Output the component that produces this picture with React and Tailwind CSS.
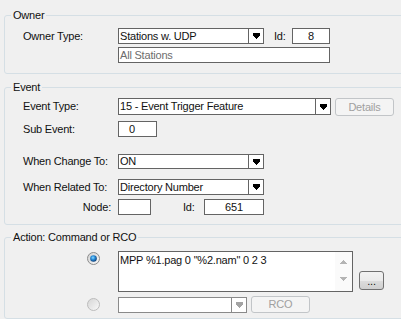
import React from 'react'

function DropArrow({ disabled }) {
  const c = disabled ? '#a3a3a3' : '#000'
  return (
    <svg width="7" height="6" viewBox="0 0 7 6" className="block" shapeRendering="crispEdges">
      <rect x="0" y="0" width="7" height="2" fill={c} />
      <rect x="0" y="2" width="7" height="1" fill={c} />
      <rect x="1" y="3" width="5" height="1" fill={c} />
      <rect x="2" y="4" width="3" height="1" fill={c} />
      <rect x="3" y="5" width="1" height="1" fill={c} />
    </svg>
  )
}

function ScrollArrow({ up }) {
  return (
    <svg width="7" height="4" viewBox="0 0 7 4" className="block" shapeRendering="crispEdges">
      {up ? (
        <>
          <rect x="3" y="0" width="1" height="1" fill="#b4b4b4" />
          <rect x="2" y="1" width="3" height="1" fill="#b4b4b4" />
          <rect x="1" y="2" width="5" height="1" fill="#b4b4b4" />
          <rect x="0" y="3" width="7" height="1" fill="#b4b4b4" />
        </>
      ) : (
        <>
          <rect x="0" y="0" width="7" height="1" fill="#b4b4b4" />
          <rect x="1" y="1" width="5" height="1" fill="#b4b4b4" />
          <rect x="2" y="2" width="3" height="1" fill="#b4b4b4" />
          <rect x="3" y="3" width="1" height="1" fill="#b4b4b4" />
        </>
      )}
    </svg>
  )
}

function Radio({ checked, disabled }) {
  return (
    <svg width="13" height="13" viewBox="0 0 13 13" className="block">
      <defs>
        <linearGradient id="rbOn" x1="0" y1="0" x2="1" y2="1">
          <stop offset="0" stopColor="#cfcfcf" />
          <stop offset="1" stopColor="#fbfbfb" />
        </linearGradient>
        <linearGradient id="rbOff" x1="0" y1="0" x2="1" y2="1">
          <stop offset="0" stopColor="#d4d4d4" />
          <stop offset="1" stopColor="#fafafa" />
        </linearGradient>
        <radialGradient id="rdot" cx="0.42" cy="0.38" r="0.62">
          <stop offset="0" stopColor="#8fdcff" />
          <stop offset="0.45" stopColor="#2a8fdc" />
          <stop offset="1" stopColor="#0d3f78" />
        </radialGradient>
      </defs>
      <circle cx="6.5" cy="6.5" r="6" fill={disabled ? 'url(#rbOff)' : 'url(#rbOn)'} stroke={disabled ? '#bcbcbc' : '#8c8c8c'} />
      {checked && <circle cx="6.5" cy="6.5" r="3.3" fill="url(#rdot)" />}
    </svg>
  )
}

function Combo({ className, value, disabled }) {
  return (
    <div className={`flex bg-white border ${disabled ? 'border-[#8a8a8a]' : 'border-[#646464]'} ${className}`}>
      <div className="flex-1 flex items-center pl-[1px] overflow-hidden whitespace-nowrap">{value}</div>
      <div className={`w-[15px] flex items-center justify-center border-l ${disabled ? 'border-[#8a8a8a]' : 'border-[#646464]'}`}>
        <DropArrow disabled={disabled} />
      </div>
    </div>
  )
}

function Field({ className, children }) {
  return (
    <div className={`flex items-center bg-white border border-[#646464] whitespace-nowrap ${className}`}>{children}</div>
  )
}

function Group({ title, className, inner, children }) {
  return (
    <fieldset className={`rounded-[3px] border border-[#d5dfe5] ${className}`}>
      <legend className="ml-[6px] px-[2px] leading-[13px]">{title}</legend>
      <div className={inner}>{children}</div>
    </fieldset>
  )
}

export default function App() {
  return (
    <div className="w-[401px] h-[319px] overflow-hidden bg-[#f0f0f0] pt-[9px] pl-[4px] text-[11px] leading-[13px] tracking-[-0.2px] text-[#111] font-['Liberation_Sans',Arial,sans-serif]">
      <div className="w-[402px] flex flex-col">
        <Group title="Owner" inner="pl-[18px] pt-[6px] pb-[10px]">
          <div className="flex items-center h-[16px]">
            <span className="w-[95px]">Owner Type:</span>
            <Combo className="w-[146px] h-[16px]" value="Stations w. UDP" />
            <span className="ml-[10px] w-[18px]">Id:</span>
            <Field className="w-[38px] h-[16px] justify-center">8</Field>
          </div>
          <div className="flex mt-[3px]">
            <Field className="ml-[95px] w-[212px] h-[16px] pl-[1px] text-[#6d6d6d]">All Stations</Field>
          </div>
        </Group>

        <Group title="Event" className="mt-[7px]" inner="pl-[18px] pt-[4px] pb-[9px]">
          <div className="flex items-start">
            <span className="w-[95px] h-[17px] flex items-center">Event Type:</span>
            <Combo className="w-[213px] h-[17px]" value="15 - Event Trigger Feature" />
            <div className="ml-[4px] w-[59px] h-[18px] rounded-[3px] border border-[#c2c5c8] bg-[#f4f4f4] text-[#a0a0a0] flex items-center justify-center">
              Details
            </div>
          </div>
          <div className="flex items-center mt-[5px] h-[16px]">
            <span className="w-[95px]">Sub Event:</span>
            <Field className="w-[39px] h-[16px] pl-[10px]">0</Field>
          </div>
          <div className="flex items-center mt-[17px] h-[15px]">
            <span className="w-[95px]">When Change To:</span>
            <Combo className="w-[146px] h-[15px]" value="ON" />
          </div>
          <div className="flex items-center mt-[10px] h-[16px]">
            <span className="w-[95px]">When Related To:</span>
            <Combo className="w-[146px] h-[16px]" value="Directory Number" />
          </div>
          <div className="flex items-center mt-[4px] h-[16px]">
            <span className="w-[95px] text-right pr-[7px]">Node:</span>
            <Field className="w-[33px] h-[16px]" />
            <span className="ml-[32px] w-[21px]">Id:</span>
            <Field className="w-[60px] h-[16px] justify-center">651</Field>
          </div>
        </Group>

        <Group title="Action: Command or RCO" className="mt-[6px]" inner="pl-[82px] pt-[7px] pb-[5px]">
          <div className="flex items-start">
            <div className="mt-[1px] w-[13px]">
              <Radio checked />
            </div>
            <div className="ml-[18px] w-[235px] h-[41px] flex bg-white border border-[#646464]">
              <div className="flex-1 pl-[1px] pt-[2px] whitespace-nowrap overflow-hidden">MPP %1.pag 0 "%2.nam" 0 2 3</div>
              <div className="w-[17px] bg-[#fafafa] flex flex-col items-center justify-between pt-[8px] pb-[10px]">
                <ScrollArrow up />
                <ScrollArrow />
              </div>
            </div>
            <div className="ml-[6px] mt-[20px] w-[25px] h-[19px] rounded-[3px] border border-[#707070] bg-[linear-gradient(#f2f2f2_0%,#ebebeb_50%,#dddddd_51%,#cfcfcf_100%)] flex items-center justify-center pt-[2px]">
              ...
            </div>
          </div>
          <div className="flex items-center mt-[4px] h-[17px]">
            <div className="w-[13px]">
              <Radio disabled />
            </div>
            <Combo className="ml-[18px] w-[129px] h-[16px]" value="" disabled />
            <div className="ml-[4px] w-[59px] h-[17px] rounded-[3px] border border-[#c2c5c8] bg-[#f4f4f4] text-[#a0a0a0] flex items-center justify-center">
              RCO
            </div>
          </div>
        </Group>
      </div>
    </div>
  )
}
